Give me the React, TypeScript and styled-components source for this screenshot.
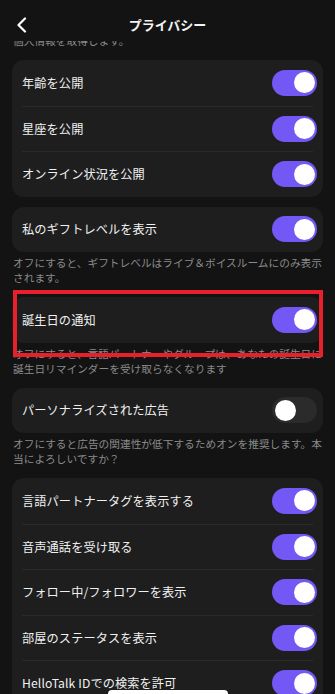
import React, { useState } from 'react';
import styled, { createGlobalStyle } from 'styled-components';

const GlobalStyle = createGlobalStyle`
  html, body {
    margin: 0;
    padding: 0;
    background: #131313;
    overflow: hidden;
  }
  body {
    font-family: "Noto Sans CJK JP", "Noto Sans", sans-serif;
    -webkit-font-smoothing: antialiased;
  }
`;

const Screen = styled.div`
  width: 335px;
  height: 694px;
  background: #131313;
  overflow: hidden;
  display: flex;
  flex-direction: column;
`;

const Header = styled.div`
  height: 41px;
  flex-shrink: 0;
  box-sizing: border-box;
  padding-top: 9px;
  display: grid;
  grid-template-columns: 44px 1fr 44px;
  align-items: center;
  background: #131313;
`;

const BackButton = styled.button`
  height: 32px;
  padding: 0 0 0 16px;
  background: none;
  border: none;
  display: flex;
  align-items: center;
  cursor: pointer;
`;

const Title = styled.div`
  text-align: center;
  color: #f4f4f4;
  font-size: 13px;
  font-weight: 700;
  line-height: 32px;
`;

const Content = styled.div`
  display: flex;
  flex-direction: column;
  padding: 0 12px;
`;

const Clip = styled.div`
  height: 19px;
  overflow: hidden;
`;

const Card = styled.div`
  background: #1e1e1e;
  border-radius: 12px;
  display: flex;
  flex-direction: column;
  & + & {
    margin-top: 10px;
  }
`;

const Row = styled.div`
  height: 45.5px;
  box-sizing: border-box;
  margin: 0 10px;
  display: flex;
  align-items: center;
  justify-content: space-between;
  & + & {
    border-top: 1px solid #2a2a2a;
  }
`;

const Label = styled.span`
  color: #f0f0f0;
  font-size: 12.2px;
  letter-spacing: 0.1px;
`;

const Note = styled.div<{ $shift?: number }>`
  color: #8b8b8b;
  font-size: 10.7px;
  line-height: 15px;
  padding: 3px 1px 12px 1px;
  margin-top: ${p => p.$shift ?? 0}px;
`;

const Track = styled.button<{ $on: boolean }>`
  width: 45px;
  height: 26px;
  margin-right: -4px;
  border-radius: 13px;
  border: none;
  padding: 0 2.5px;
  display: flex;
  align-items: center;
  justify-content: ${p => (p.$on ? 'flex-end' : 'flex-start')};
  background: ${p => (p.$on ? '#7358f6' : '#2b2b2b')};
  cursor: pointer;
`;

const Knob = styled.span`
  width: 21px;
  height: 21px;
  border-radius: 50%;
  background: #ffffff;
`;

const Highlight = styled.div`
  position: relative;
  &::after {
    content: '';
    position: absolute;
    left: 0.5px;
    right: 0;
    top: -7px;
    bottom: -14.5px;
    border: 4.5px solid #e8202b;
    pointer-events: none;
  }
`;

const HomeBar = styled.div`
  position: fixed;
  left: 108px;
  bottom: -4px;
  width: 120px;
  height: 8px;
  border-radius: 4px;
  background: #ffffff;
`;

const Toggle: React.FC<{ initial: boolean }> = ({ initial }) => {
  const [on, setOn] = useState(initial);
  return (
    <Track $on={on} onClick={() => setOn(!on)}>
      <Knob />
    </Track>
  );
};

const Chevron = () => (
  <svg width="11" height="16" viewBox="0 0 11 16">
    <polyline points="9,1.5 2.5,8 9,14.5" fill="none" stroke="#ffffff" strokeWidth="2.2" strokeLinecap="round" strokeLinejoin="round" />
  </svg>
);

const SettingRow: React.FC<{ label: string; on?: boolean }> = ({ label, on = true }) => (
  <Row>
    <Label>{label}</Label>
    <Toggle initial={on} />
  </Row>
);

const App: React.FC = () => {
  return (
    <>
      <GlobalStyle />
      <Screen>
        <Header>
          <BackButton>
            <Chevron />
          </BackButton>
          <Title>プライバシー</Title>
          <div />
        </Header>
        <Content>
          <Clip>
            <Note $shift={-11}>個人情報を取得します。</Note>
          </Clip>
          <Card>
            <SettingRow label="年齢を公開" />
            <SettingRow label="星座を公開" />
            <SettingRow label="オンライン状況を公開" />
          </Card>
          <Card>
            <SettingRow label="私のギフトレベルを表示" />
          </Card>
          <Note>オフにすると、ギフトレベルはライブ＆ボイスルームにのみ表示されます。</Note>
          <Highlight>
            <Card>
              <SettingRow label="誕生日の通知" />
            </Card>
          </Highlight>
          <Note>オフにすると、言語パートナーやグループは、あなたの誕生日に誕生日リマインダーを受け取らなくなります</Note>
          <Card>
            <SettingRow label="パーソナライズされた広告" on={false} />
          </Card>
          <Note>オフにすると広告の関連性が低下するためオンを推奨します。本当によろしいですか？</Note>
          <Card>
            <SettingRow label="言語パートナータグを表示する" />
            <SettingRow label="音声通話を受け取る" />
            <SettingRow label="フォロー中/フォロワーを表示" />
            <SettingRow label="部屋のステータスを表示" />
            <SettingRow label="HelloTalk IDでの検索を許可" />
          </Card>
        </Content>
        <HomeBar />
      </Screen>
    </>
  );
};

export default App;
